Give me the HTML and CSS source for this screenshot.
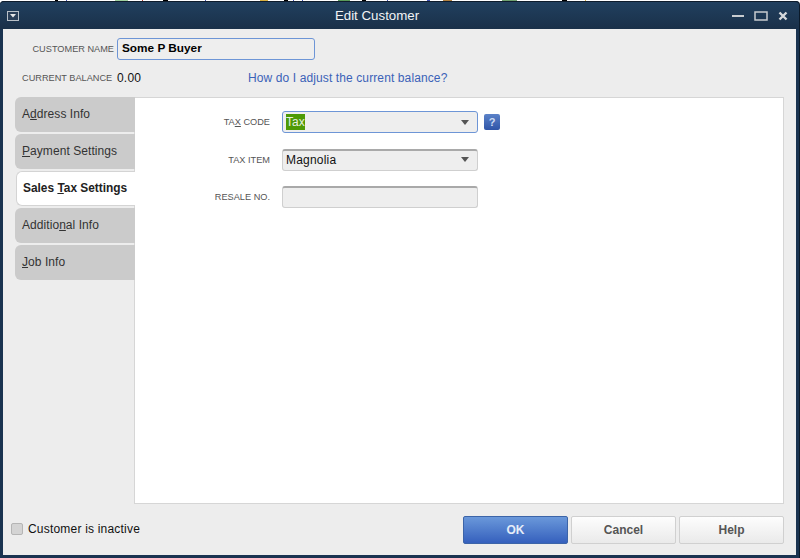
FILE: index.html
```html
<!DOCTYPE html>
<html lang="en">
<head>
<meta charset="utf-8">
<title>Edit Customer</title>
<link rel="stylesheet" href="styles.css">
</head>
<body>
<div class="window">
  <header class="titlebar">
    <span class="sysmenu"><svg width="12" height="10" viewBox="0 0 12 10"><rect x="0.5" y="0.5" width="11" height="9" fill="#2a3f58" stroke="#b9c0c8"/><path d="M3 3h6L6 6.5z" fill="#e8e8e8"/></svg></span>
    <span class="title">Edit Customer</span>
    <span class="winctl">
      <svg width="12" height="4" viewBox="0 0 12 4"><rect y="1" width="12" height="2" fill="#c8ccd0"/></svg>
      <svg width="14" height="10" viewBox="0 0 14 10"><rect x="1" y="1" width="12" height="8" fill="none" stroke="#c8ccd0" stroke-width="1.5"/></svg>
      <svg width="10" height="10" viewBox="0 0 10 10"><path d="M1.5 1.5l7 7M8.5 1.5l-7 7" stroke="#d6d9dc" stroke-width="2.4"/></svg>
    </span>
  </header>
  <main class="client">
    <div class="head-row name-row">
      <span class="cap cap-name">CUSTOMER NAME</span>
      <div class="name-input">Some P Buyer</div>
    </div>
    <div class="head-row balance-row">
      <span class="cap cap-bal">CURRENT BALANCE</span>
      <span class="balance">0.00</span>
      <a class="link">How do I adjust the current balance?</a>
    </div>
    <div class="tabs-area">
      <nav class="tabs">
        <div class="tab"><span>A<u>d</u>dress Info</span></div>
        <div class="tab"><span><u>P</u>ayment Settings</span></div>
        <div class="tab active"><span>Sales <u>T</u>ax Settings</span></div>
        <div class="tab"><span>Additio<u>n</u>al Info</span></div>
        <div class="tab"><span><u>J</u>ob Info</span></div>
      </nav>
      <section class="panel">
        <div class="field field-code">
          <label class="cap field-label">TA<u>X</u> CODE</label>
          <div class="combo focus"><span class="sel">Tax</span><i class="arrow"></i></div>
          <span class="help-q">?</span>
        </div>
        <div class="field field-item">
          <label class="cap field-label">TAX ITEM</label>
          <div class="combo"><span>Magnolia</span><i class="arrow"></i></div>
        </div>
        <div class="field">
          <label class="cap field-label">RESALE NO.</label>
          <div class="combo"></div>
        </div>
      </section>
    </div>
    <footer class="footer">
      <label class="inactive"><span class="check"></span>Customer is inactive</label>
      <div class="buttons">
        <button class="btn primary">OK</button>
        <button class="btn">Cancel</button>
        <button class="btn">Help</button>
      </div>
    </footer>
  </main>
</div>
</body>
</html>
```
FILE: styles.css
```css
* { box-sizing: border-box; }
html, body { margin: 0; padding: 0; }
body {
  width: 800px; height: 558px; overflow: hidden;
  font-family: "Liberation Sans", Arial, sans-serif;
  color: #111;
  background-color: #fff;
  background-image: linear-gradient(90deg,
    #fff 0 55px, #000 55px 58px, #fff 58px 66px, #4050b0 66px 67px,
    #fff 67px 115px, #9fd09f 115px 128px, #fff 128px 142px, #b04030 142px 143px,
    #fff 143px 163px, #000 163px 168px, #fff 168px 205px, #4050b0 205px 206px,
    #fff 206px 260px, #d8b040 260px 268px, #fff 268px 284px, #000 284px 288px,
    #fff 288px 293px, #4050b0 293px 294px, #fff 294px 302px, #4050b0 302px 303px,
    #fff 303px 338px, #5a9a5a 338px 350px, #fff 350px 362px, #000 362px 366px,
    #fff 366px 387px, #4050b0 387px 388px, #fff 388px 427px, #4050b0 427px 430px,
    #fff 430px 443px, #b08040 443px 452px, #fff 452px 502px, #6fa06f 502px 517px,
    #fff 517px 562px, #000 562px 567px, #fff 567px 585px, #d8b040 585px 586px,
    #fff 586px 800px);
  background-size: 800px 1px;
  background-repeat: no-repeat;
}
.window {
  width: 799px; height: 557px;
  margin-top: 1px;
  background: #1a3350;
  border-radius: 4px 4px 0 0;
  display: flex; flex-direction: column;
  padding: 0 3px 3px 3px;
  box-shadow: 1px 0 0 #0b1a2a;
}
.titlebar {
  height: 28px; flex: none;
  margin: 0 -3px;
  padding: 0 0 0 7px;
  display: flex; align-items: center;
  background: linear-gradient(#21405f, #1a3049);
  border-top: 1px solid #0e1c2c;
  border-radius: 4px 4px 0 0;
}
.sysmenu { display: flex; }
.title {
  flex: 1; text-align: center; color: #f1f3f5; font-size: 13.3px;
  padding-left: 3px;
}
.winctl { display: flex; align-items: center; gap: 10px; padding-right: 11px; }
.client {
  flex: 1; min-height: 0;
  background: #ededed;
  display: flex; flex-direction: column;
  padding: 0 12px;
}
.cap { font-size: 9.2px; color: #555; }
.head-row { display: flex; align-items: center; }
.name-row { margin-top: 8px; height: 23px; }
.cap-name { width: 102px; text-align: right; padding-right: 3px; white-space: nowrap; }
.name-input {
  width: 198px; height: 22px;
  border: 1px solid #6d95d6; border-radius: 3px;
  background: #eeeeee;
  font-size: 11.8px; font-weight: bold; color: #000;
  padding: 0 4px; line-height: 19px;
}
.balance-row { margin-top: 9px; height: 18px; }
.cap-bal { margin-left: 7px; width: 95px; white-space: nowrap; }
.balance { font-size: 12px; color: #111; width: 131px; letter-spacing: .2px; }
.link { font-size: 12px; color: #3b62b8; letter-spacing: .11px; }
.tabs-area { flex: 1; min-height: 0; display: flex; margin-top: 10px; }
.tabs { width: 120px; flex: none; display: flex; flex-direction: column; gap: 2px; position: relative; z-index: 1; }
.tab {
  height: 35px; background: #cbcbcb;
  border-radius: 6px 0 0 6px;
  display: flex; align-items: center;
  padding: 0 0 2px 7px;
  font-size: 12px; color: #333; letter-spacing: .06px;
}
.tab.active {
  background: #fff; font-weight: bold; color: #222;
  margin-left: 1px; padding-left: 6px;
  font-size: 11.9px; letter-spacing: 0;
  border: 1px solid #d4d4d4; border-right: 0;
}
.panel {
  flex: 1; background: #fff;
  border: 1px solid #d6d6d6;
  margin-left: -1px;
  padding: 13px 0 0 0;
}
.field { display: flex; align-items: center; height: 22px; margin-bottom: 15px; }
.field-code { margin-bottom: 16px; }
.field-label { width: 135px; text-align: right; flex: none; }
.combo {
  width: 196px; height: 22px; margin-left: 12px;
  border: 1px solid #cfcfcf; border-top: 2px solid #a9a9a9; border-radius: 3px;
  background: #eeeeee;
  display: flex; align-items: center; justify-content: space-between;
  font-size: 12px; color: #111; letter-spacing: .2px;
  padding: 0 8px 2px 3px;
}
.combo.focus { border: 1px solid #6d95d6; padding-bottom: 0; }
.sel { background: #4e9a06; color: #e8f0e0; line-height: 16px; display: inline-block; width: 19px; letter-spacing: 0; }
.arrow { width: 0; height: 0; border: 4.5px solid transparent; border-top: 5px solid #555; border-bottom: 0; }
.help-q {
  width: 16px; height: 16px; margin-left: 6px;
  border-radius: 2px;
  background: linear-gradient(#5b82c8, #2f55a8);
  color: #cfdcf2; font-size: 11px; font-weight: bold;
  text-align: center; line-height: 16px;
}
.footer {
  flex: none; height: 51px;
  display: flex; align-items: center; justify-content: space-between;
  padding-top: 1px;
}
.inactive { display: flex; align-items: center; font-size: 12px; color: #111; margin-left: -4px; margin-bottom: 3px; letter-spacing: .2px; }
.check { width: 12px; height: 12px; border: 1px solid #b5b5b5; border-radius: 2px; background: #d4d4d4; margin-right: 5px; }
.buttons { display: flex; gap: 3px; }
.btn {
  width: 105px; height: 28px;
  border: 1px solid #d0d0d0; border-radius: 2px;
  background: linear-gradient(#fdfdfd, #eaeaea);
  font-family: inherit; font-size: 12px; font-weight: bold; color: #555;
  padding: 0;
}
.btn.primary {
  border-color: #3c64a8;
  background: linear-gradient(#6a98da, #3560bd);
  color: #e6edf8;
}
```
